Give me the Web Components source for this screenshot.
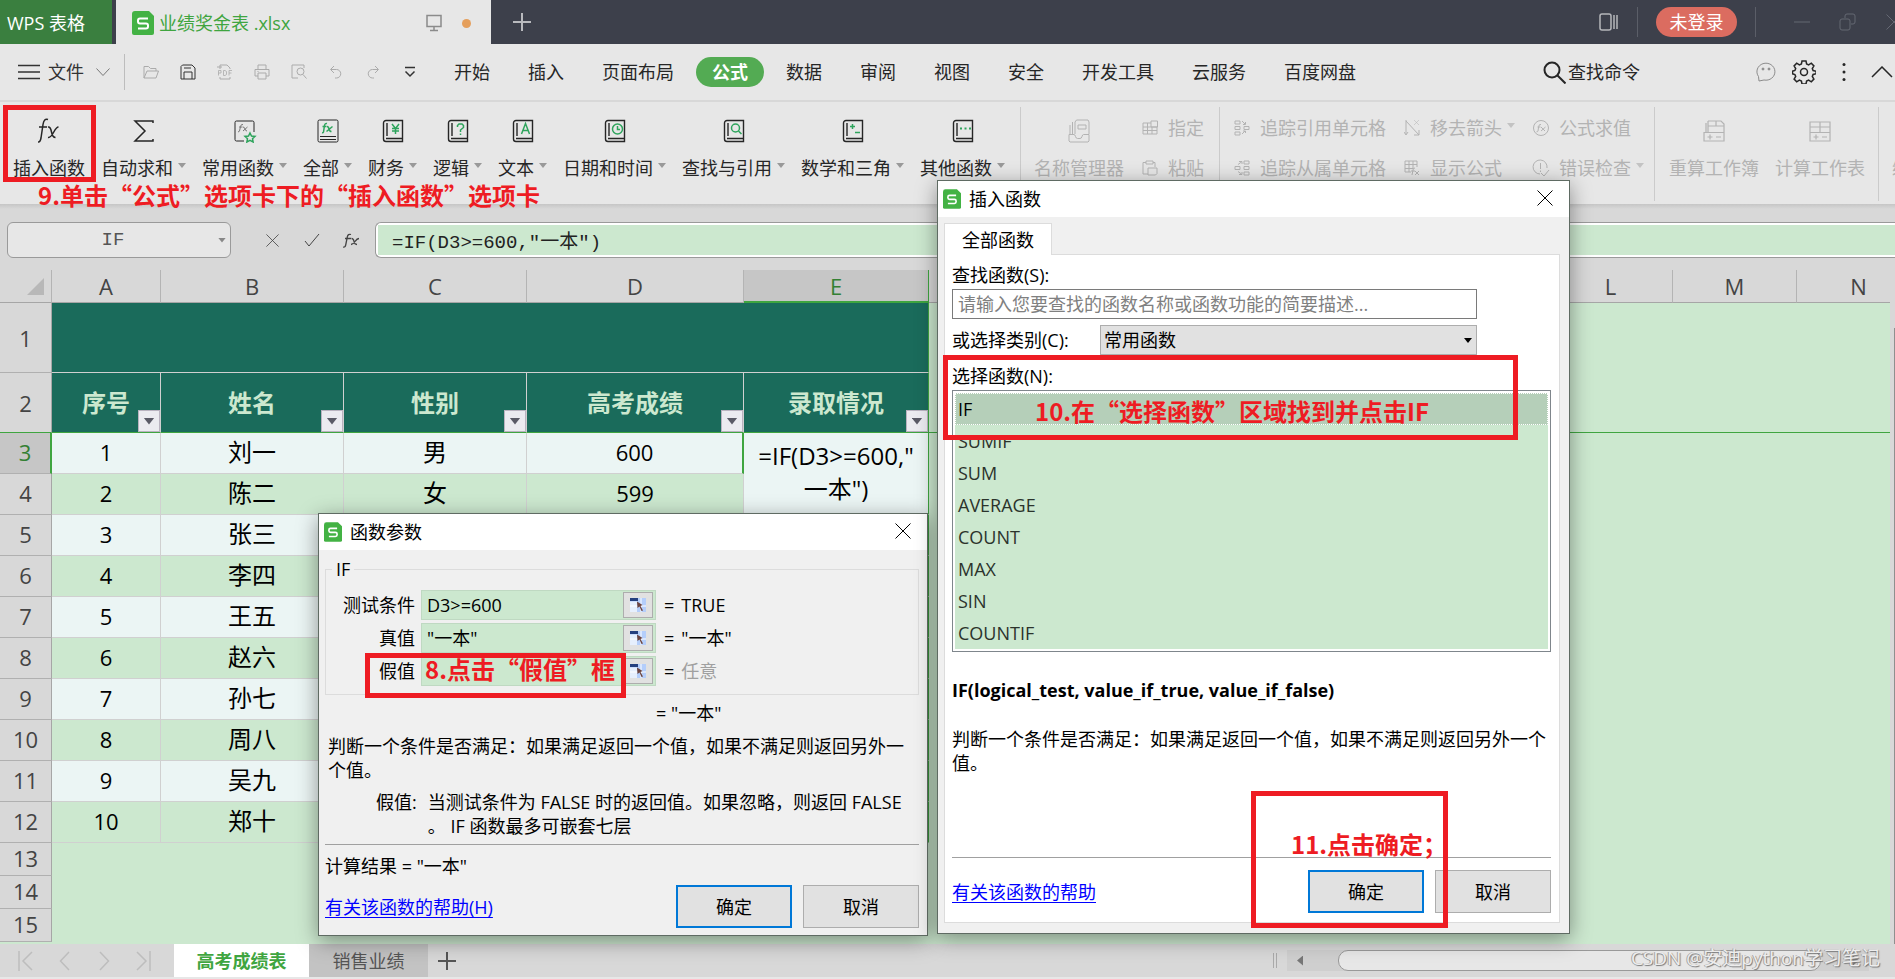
<!DOCTYPE html>
<html lang="zh-CN">
<head>
<meta charset="utf-8">
<title>业绩奖金表 .xlsx - WPS 表格</title>
<style>
html, body { margin: 0; height: 100%; }
body {
  font: 18px/24px "Open Sans", "Noto Sans CJK SC", sans-serif;
  color: #262626;
  overflow: hidden;
  --chrome: #e7e7e7;
  --bar: #d8d8d8;
  --line: #a6a6a6;
  --mint: #cce8cf;
  --green: #3fa540;
  --red: #ee1c23;
}
</style>
</head>
<body>
<wps-app></wps-app>

<script>
const ICONS = {
  logo: [22, 24, '<path d="M3 0h14l5 5v17a2 2 0 0 1-2 2H2a2 2 0 0 1-2-2V3a3 3 0 0 1 3-3z" fill="#43b244" stroke="none"/><path d="M16 7.500H8a2 2 0 0 0-2 2v1a2 2 0 0 0 2 2h6a2 2 0 0 1 2 2v1a2 2 0 0 1-2 2H6" fill="none" stroke="#fff" stroke-width="2"/>'],
  monitor: [18, 18, '<path d="M2 1.500h14v11H2zM9 13v3M5 16.500h8" stroke="#8b8b8b" stroke-width="1.500"/>'],
  plus: [18, 18, '<path d="M9 0v18M0 9h18" stroke-width="2"/>'],
  panels: [22, 20, '<rect x="2" y="2" width="11" height="16" rx="2" stroke-width="1.500"/><path d="M16 3v14M19 3v14" stroke-width="1.500"/>'],
  minimize: [16, 16, '<path d="M0 8h16"/>'],
  restore: [18, 18, '<rect x="1" y="6" width="10" height="11" rx="2"/><path d="M6 5V3a2 2 0 0 1 2-2h6a2 2 0 0 1 2 2v6a2 2 0 0 1-2 2h-2"/>'],
  close: [16, 16, '<path d="M0.500 0.500l15 15M15.500 0.500l-15 15"/>'],
  menu: [22, 16, '<path d="M0 1.500h22M0 8h22M0 14.500h22" stroke-width="1.500"/>'],
  down: [14, 8, '<path d="M0.500 0.500l6.500 7 6.500-7"/>'],
  up: [22, 12, '<path d="M1 11L11 1l10 10" stroke-width="1.500"/>'],
  folder: [16, 14, '<path d="M1 13V1.500h4.500l2 2H13V6M1 13l3-7h11.500L13 13z"/>'],
  save: [16, 16, '<path d="M1 15V2.500L2.500 1H12l3 3v11zM4 15V8h8v7M4 4h7"/>'],
  pdf: [16, 16, '<path d="M3 5V1h7l3 3v1M3 13v2h10v-2M0 3h5"/><path d="M1.500 11.500V6.500h2.500v2.500H1.500M6.500 6.500h1.500l1.500 1v3l-1.500 1H6.500zM12 11.500V6.500h3M12 9h2.500" stroke-width=".8"/>'],
  print: [16, 16, '<path d="M4 5V1h8v4M4 12H1V5.500h14V12h-3M4 9h8v6H4zM3.500 7.500h1"/>'],
  preview: [16, 16, '<path d="M7 14H1V1h12v3"/><circle cx="9.500" cy="7.500" r="3.500"/><path d="M12 10.500l3.500 4"/>'],
  undo: [14, 14, '<path d="M5 1L1.500 4.500 5 8M2 4.500h5.500a4 4 0 0 1 0 8.500H6"/>'],
  redo: [14, 14, '<path d="M9 1l3.500 3.500L9 8M12 4.500H6.500a4 4 0 0 0 0 8.500H8"/>'],
  more: [12, 12, '<path d="M1 1.500h10M1.500 5.500L6 10l4.500-4.500" stroke-width="1.500"/>'],
  search: [23, 23, '<circle cx="9" cy="9" r="7.500" stroke-width="2"/><path d="M14.500 14.500l8 8" stroke-width="2"/>'],
  chat: [22, 20, '<path d="M4 19l-.5-4.500A9 8.500 0 1 1 9 18z"/><circle cx="8" cy="7" r="1" fill="currentColor"/><circle cx="14" cy="7" r="1" fill="currentColor"/>'],
  gear: [24, 24, '<path d="M10 1h4l.6 3 2 .9 2.700-1.700 2.600 2.700-1.600 2.600.8 2 3 .7v2.600l-3 .7-.8 2 1.600 2.600-2.600 2.700-2.700-1.700-2 .9-.6 3h-4l-.6-3-2-.9-2.700 1.700-2.600-2.700 1.600-2.600-.8-2-2.400-.7v-2.600l2.400-.7.8-2L2.100 5.900l2.600-2.700 2.700 1.700 2-.9z" stroke-width="1.500"/><circle cx="12" cy="12" r="3.500" stroke-width="1.500"/>'],
  dots: [4, 20, '<g fill="currentColor" stroke="none"><circle cx="2" cy="2.500" r="1.500"/><circle cx="2" cy="10" r="1.500"/><circle cx="2" cy="17.500" r="1.500"/></g>'],
  sigma: [22, 24, '<path d="M20 4V2H2l10 10L2 22h18v-2" stroke-width="1.500"/>'],
  fav: [24, 24, '<path d="M11 22H3.500A1.500 1.500 0 0 1 2 20.500v-17A1.500 1.500 0 0 1 3.500 2h16A1.500 1.500 0 0 1 21 3.500V13"/><path d="M10 5.500q-2-.5-2.500 2L6.500 12q-.4 1-1.500.8M6 8h3.500M10 8q1.500 0 2 2t2 2M14.500 8L10 12" stroke="#777"/><path d="M17 14l1.500 3 3.500.4-2.500 2.300.6 3.300-3.100-1.600-3.100 1.600.6-3.300-2.500-2.300 3.500-.4z" stroke="#2ea45c" stroke-width="1.500"/>'],
  all: [24, 24, '<rect x="2" y="1" width="20" height="22" rx="1.500" /><path d="M4 17.500h16M4 20.500h16"/><path d="M11 4.500q-2-.5-2.500 2L7.500 13q-.4 1-1.500.8M6.500 7.500h4M11 7.500q1.500 0 2 2.500t2.500 2.500M16.500 7.500l-6 5" stroke="#2ea45c" stroke-width="1.500"/>'],
  money: book('<path d="M10 5l3.500 4.500L17 5M13.500 9.500V15M10 9.500h7M10 12h7"/>'),
  logic: book('<path d="M10.500 8V6.500l1.500-1.500h3l1.500 1.500v2L13.500 11v2M13.500 14.500V16"/>'),
  text: book('<path d="M9.500 15l4-10.500 4 10.500M11 11.500h5"/>'),
  date: book('<circle cx="13.500" cy="10" r="5"/><path d="M13.500 7v3.500H16"/>'),
  lookup: book('<circle cx="12.500" cy="9" r="4"/><path d="M15.500 12l3 3"/>'),
  math: book('<path d="M8 7.500h5M10.500 5v5M13 13.500h5"/>'),
  other: book('<path d="M8 9.500h2M12.500 9.500h2M17 9.500h2" stroke-width="2"/>'),
  names: [24, 24, '<path d="M3 6v9M5.500 3v12M8 15V3l1.500-2H21l1 2v12M2 15.500h5q1 0 1.500 2t2 2h2.500q1.500 0 2-2t1.500-2H22V22l-1 1H3l-1-1zM11 6h8v4h-8z"/>'],
  assign: [16, 16, '<path d="M9 3H1v11h14V7M1 7h14M1 10.500h14M5.500 3v11M10 7v7M9 1h6.500v6H9z"/>'],
  paste: [16, 16, '<path d="M4 2.500H1V14h5M11 2.500h2V7M4 1h7v3H4zM6 8h9v5.500L13.500 15H6z"/>'],
  precede: [16, 16, '<path d="M1 1h5v3H1zM1 6.500h5v3H1zM1 12h5v3H1zM10 6.500h5v3h-5zM8 1l3 3M11.500 2v2.500H9M8 14l3-3M9 11h2.500v2"/>'],
  depend: [16, 16, '<path d="M10 1h5v3h-5zM10 6.500h5v3h-5zM10 12h5v3h-5zM1 6.500h5v3H1zM4 4.500L7.500 2M5 1.500h3V4M4 11.500L7.500 14M5 14.500h3V12"/>'],
  unarrow: [16, 16, '<path d="M2 0v14M0 12l2 3 2-3M2 1l13 14M15 10v5h-5"/><path d="M10 0l5 5M15 0l-5 5" opacity=".5"/>'],
  show: [16, 16, '<path d="M7 12H1V1h12v6M1 4.500h12M1 8.500h8M5 1v11M9 1v8M11 8q-2 0-2 2l-1 5M7 11h4M11 11l4 4M15 11l-4 4"/>'],
  evaluate: [18, 18, '<circle cx="9" cy="9" r="7.500"/><path d="M9 5.500q-2-.5-2.300 2L6 12q-.3 1-1.500.8M5.500 8h3M9 8l4 4M13.500 8L9 12"/>'],
  check: [18, 18, '<path d="M8 15A7 7 0 1 1 15 9"/><path d="M8.500 4v6M8.500 11.500v1.500M9 14l3 3 5-6"/>'],
  calcbook: [24, 24, '<path d="M4 13V4M6 2h13l3 3v8M6 2v11M6 7h16M14 2v5M2 13.500h20V22H2zM5.500 18h5M8 15.500v5M14 18h5" stroke-width="1.200"/>'],
  calcsheet: [24, 24, '<path d="M2 13V3h20v10M2 8h20M12 3v10M2 13.500h20V22H2zM5.500 18h5M8 15.500v5M14 18h5" stroke-width="1.200"/>'],
  tick: [16, 14, '<path d="M1 8l4 5L15 1"/>'],
  fx: [22, 26, '<path d="M10 1.500q-4-1.500-5 5L3 20q-.8 4.500-3 4M1 9h8M10 9q2.500-.5 3.500 5t4 5.500M20.500 9q-2 0-5 5.500T10 19.500" stroke-width="1.500"/>'],
  fxs: [18, 15, '<path d="M9 1.500q-3-1-3.700 2.500L3.700 12q-.5 2.500-2.500 2M3 5.500h6M9.500 5.500q2 0 2.500 3t3 3M17 5.500q-2 0-4 3t-4 3" stroke-width="1.300"/>'],
  first: [16, 20, '<path d="M1 0v20M14 1L5 10l9 9" stroke-width="1.500"/>'],
  prev: [12, 20, '<path d="M10 1L1.500 10l8.500 9" stroke-width="1.500"/>'],
  next: [12, 20, '<path d="M2 1l8.500 9L2 19" stroke-width="1.500"/>'],
  last: [16, 20, '<path d="M15 0v20M2 1l9 9-9 9" stroke-width="1.500"/>'],
  range: [16, 14, '<path d="M0 0h16v14H0z" fill="#b4cefb" stroke="none"/><path d="M0 3.500h7V14H0z" fill="#e6effd" stroke="none"/><path d="M0 0h8v3H0z" fill="#25407f" stroke="none"/><path d="M0 8h16M11 0v14" stroke="#fff"/><path d="M7 3.500l5.500 3.500-2 1 2.500 4.500-1.500.5-2-4.500L7.500 10z" fill="#6b4440" stroke="none"/>'],
};

function book(mark) {
  return [22, 24, `<path d="M20.500 19.500V1.500H4A2.500 2.500 0 0 0 1.500 4v16A2.500 2.500 0 0 0 4 22.500h16.500v-3H4M5 4v13" stroke-width="1.400"/><g stroke="#2ea45c" stroke-width="1.500">${mark}</g>`];
}

/* Registers an element whose open shadow root holds the given styles and markup. */
function define(name, css, html) {
  const base = document.createElement('template');
  base.innerHTML = `<style>*{box-sizing:border-box}button,input,select{font:inherit;color:inherit;margin:0;padding:0;border:0;background:none}${css}</style>`;
  customElements.define(name, class extends HTMLElement {
    constructor() {
      super();
      this.attachShadow({ mode: 'open' });
    }
    connectedCallback() {
      if (this.shadowRoot.childNodes.length) return;
      const body = document.createElement('template');
      body.innerHTML = typeof html === 'function' ? html(this) : html;
      this.shadowRoot.append(base.content.cloneNode(true), body.content.cloneNode(true));
    }
  });
}

define('ui-icon', ':host{display:inline-flex;flex:none}svg{display:block;fill:none;stroke:currentColor}', el => {
  const [w, h, art] = ICONS[el.getAttribute('name')];
  const scale = Number(el.getAttribute('scale') || 1);
  return `<svg width="${Math.round(w * scale)}" height="${Math.round(h * scale)}" viewBox="0 0 ${w} ${h}" aria-hidden="true">${art}</svg>`;
});

define('ui-caret', ':host{display:block;flex:none;width:8px;height:5px;background:currentColor;clip-path:polygon(0 0,100% 0,50% 100%)}', '');

define('title-bar', `
:host{display:flex;height:44px;background:#3d404b;color:#fff;align-items:center;overflow:hidden;flex:none}
button{display:grid;place-items:center}
.home{width:112px;height:44px;background:#3a7f3f;padding:2px 0 0 7px;justify-content:start;margin-right:4px}
.doc{display:flex;align-items:center;width:375px;height:44px;background:var(--chrome);color:var(--green);padding:2px 20px 0 16px;gap:5px}
.doc span{flex:1}
.doc ui-icon:nth-of-type(2){margin-right:6px}
.doc i{width:9px;height:9px;border-radius:50%;background:#e59f5c;margin-left:8px}
.add{width:62px;color:#b9babe}
.space{flex:1}
.panels{color:#b5b6bb;margin-right:17px}
hr{width:1px;height:30px;border:0;margin:0;background:#5b5e68}
.login{width:81px;height:30px;border-radius:15px;background:#db6c60;margin:0 18px}
.windows{display:flex;margin:0 -22px 0 23px}
.windows button{width:46px;color:#656873}
`, `
<button class="home">WPS 表格</button>
<div class="doc"><ui-icon name="logo"></ui-icon><span>业绩奖金表 .xlsx</span><ui-icon name="monitor"></ui-icon><i></i></div>
<button class="add" aria-label="新建"><ui-icon name="plus"></ui-icon></button>
<div class="space"></div>
<button class="panels" aria-label="窗口"><ui-icon name="panels"></ui-icon></button><hr>
<button class="login">未登录</button><hr>
<div class="windows"><button aria-label="最小化"><ui-icon name="minimize"></ui-icon></button><button aria-label="还原"><ui-icon name="restore"></ui-icon></button><button aria-label="关闭"><ui-icon name="close"></ui-icon></button></div>`);

define('menu-bar', `
:host{display:flex;height:56px;background:var(--chrome);align-items:center;flex:none;overflow:hidden}
button{display:grid;place-items:center;white-space:nowrap;flex:none}
.file{display:flex;align-items:center;gap:8px;padding-left:18px;color:#333}
.file ui-icon:last-child{margin-left:4px;color:#777}
hr{width:1px;height:36px;border:0;background:#bdbdbd;margin:0 7px 0 14px}
.quick{width:37px;color:#ababab}
.quick.on{color:#333}
nav{display:flex;margin-left:7px}
nav button{height:30px;margin:0 3px;padding:0 16px}
nav .active{background:#53ab53;color:#fff;border-radius:15px;font-weight:bold}
.find{display:flex;gap:2px;margin-left:168px}
.space{flex:1}
.tool{margin-left:15px}
.tool.soft{color:#8c8c8c}
.tool.dots{margin:0 10px 0 26px}
.tool:last-child{margin-right:2px}
`, () => {
  const quick = ['folder', 'save', 'pdf', 'print', 'preview', 'undo', 'redo', 'more'];
  const names = ['打开', '保存', '输出为PDF', '打印', '打印预览', '撤销', '恢复', '更多'];
  const tabs = ['开始', '插入', '页面布局', '公式', '数据', '审阅', '视图', '安全', '开发工具', '云服务', '百度网盘'];
  return `<button class="file"><ui-icon name="menu"></ui-icon>文件<ui-icon name="down"></ui-icon></button><hr>
  ${quick.map((q, i) => `<button class="quick ${q === 'save' || q === 'more' ? 'on' : ''}" aria-label="${names[i]}"><ui-icon name="${q}"></ui-icon></button>`).join('')}
  <nav>${tabs.map(t => `<button class="${t === '公式' ? 'active' : ''}">${t}</button>`).join('')}</nav>
  <button class="find"><ui-icon name="search"></ui-icon>查找命令</button><div class="space"></div>
  <button class="tool soft" aria-label="反馈"><ui-icon name="chat"></ui-icon></button>
  <button class="tool" aria-label="设置"><ui-icon name="gear"></ui-icon></button>
  <button class="tool dots" aria-label="更多"><ui-icon name="dots"></ui-icon></button>
  <button class="tool" aria-label="收起"><ui-icon name="up"></ui-icon></button>`;
});

define('ribbon-button', `
:host{display:block;flex:none}
:host([disabled]){color:#b3b3b3}
button{display:flex;flex-direction:column;align-items:center;padding:0 8px;gap:12px;white-space:nowrap}
.icon{height:26px;display:grid;place-items:center}
.label{display:flex;gap:5px}
ui-caret{color:#999;margin-top:7px}
:host([small]) button{flex-direction:row;padding:0;gap:9px}
:host([small]) .icon{width:18px}
:host([disabled]) ui-caret{color:#c3c3c3}
`, el => `<button><span class="icon"><ui-icon name="${el.getAttribute('icon')}"></ui-icon></span><span class="label"><slot></slot>${el.hasAttribute('arrow') ? '<ui-caret></ui-caret>' : ''}</span></button>`);

define('ribbon-bar', `
:host{display:flex;height:104px;background:var(--chrome);border-top:2px solid var(--bar);flex:none;overflow:hidden;padding:16px 0 0 5px}
ribbon-button:first-child{margin-right:5px}
hr{width:1px;height:94px;border:0;background:#cbcbcb;margin:-11px 0 0;flex:none}
.pair{display:flex;flex-direction:column;gap:14px;flex:none;margin-top:-3px}
`, () => {
  const big = [['fx', '插入函数'], ['sigma', '自动求和', 1], ['fav', '常用函数', 1], ['all', '全部', 1], ['money', '财务', 1], ['logic', '逻辑', 1], ['text', '文本', 1], ['date', '日期和时间', 1], ['lookup', '查找与引用', 1], ['math', '数学和三角', 1], ['other', '其他函数', 1]];
  const small = (icon, label, arrow) => `<ribbon-button small disabled icon="${icon}" ${arrow ? 'arrow' : ''}>${label}</ribbon-button>`;
  return big.map(([i, l, a]) => `<ribbon-button icon="${i}" ${a ? 'arrow' : ''}>${l}</ribbon-button>`).join('') + `
  <hr style="margin-left:7px"><ribbon-button disabled icon="names" style="margin-left:5px">名称管理器</ribbon-button>
  <div class="pair" style="margin-left:9px;margin-right:10px">${small('assign', '指定')}${small('paste', '粘贴')}</div><hr>
  <div class="pair" style="margin-left:13px">${small('precede', '追踪引用单元格')}${small('depend', '追踪从属单元格')}</div>
  <div class="pair" style="margin-left:12px">${small('unarrow', '移去箭头', 1)}${small('show', '显示公式')}</div>
  <div class="pair" style="margin-left:12px;margin-right:10px">${small('evaluate', '公式求值')}${small('check', '错误检查', 1)}</div><hr>
  <ribbon-button disabled icon="calcbook" style="margin-left:6px">重算工作簿</ribbon-button>
  <ribbon-button disabled icon="calcsheet">计算工作表</ribbon-button><hr style="margin-left:5px">
  <ribbon-button disabled icon="names" style="margin-left:5px">编辑链接</ribbon-button>`;
});

define('formula-bar', `
:host{display:flex;height:66px;flex:none;background:linear-gradient(#c6c6c6,var(--bar) 5px);padding:18px 0 12px 7px;align-items:center;font-family:"Liberation Mono","Noto Sans CJK SC",monospace;font-size:19px}
.name{display:flex;align-items:center;width:224px;height:36px;border:1px solid #9a9a9a;border-radius:6px;background:var(--chrome);padding:0 4px 0 0;color:#555}
.name input{flex:1;min-width:0;text-align:center}
.name ui-caret{color:#888}
.acts{display:flex;width:144px;padding:0 5px 0 22px;color:#444}
.acts button{flex:1;display:grid;place-items:center}
.formula{flex:1;min-width:0;height:36px;border:1px solid #9a9a9a;border-right:0;border-radius:6px 0 0 6px;background:#fff;padding:2px 0 2px 2px}
.formula input{width:100%;height:30px;display:block;background:var(--mint);padding-left:14px;color:#222}
`, `
<div class="name"><input aria-label="名称框" value="IF"><ui-caret></ui-caret></div>
<div class="acts"><button aria-label="取消"><ui-icon name="close" scale="0.8"></ui-icon></button><button aria-label="输入"><ui-icon name="tick"></ui-icon></button><button aria-label="插入函数"><ui-icon name="fxs"></ui-icon></button></div>
<div class="formula"><input aria-label="编辑栏" value='=IF(D3>=600,"一本")'></div>`);

define('sheet-grid', `
:host{display:flex;flex:1;min-height:0;overflow:hidden;background:var(--bar)}
.view{flex:1;min-width:0;overflow:hidden;background:var(--mint)}
.bar{width:5px;border-right:1px solid #8f8f8f;margin-top:58px}
table{width:100%;min-width:1921px;table-layout:fixed;border-collapse:separate;border-spacing:0;font-size:22px;line-height:30px;text-align:center;color:#000}
td,th{padding:0;font-weight:normal;position:relative;overflow:hidden}
thead th{height:33px;background:var(--bar);color:#444;border-bottom:1px solid var(--line);border-right:1px solid #b4b4b4}
thead th:nth-child(6){background:#c6c6c6;color:#338033;border-bottom:2px solid var(--green);border-right-color:var(--green)}
.corner::after{content:"";position:absolute;right:7px;bottom:7px;width:17px;height:17px;background:#b8b8b8;clip-path:polygon(100% 0,100% 100%,0 100%)}
tbody th{background:var(--bar);color:#444;border-right:1px solid var(--line);border-bottom:1px solid #b0b0b0}
tbody td{border-right:1px solid #d0d0d0;border-bottom:1px solid #d0d0d0}
.person{height:41px}
.person td,.person th{padding-bottom:2px}
td.zh{font-size:24px}
.short{height:33px}
.short th{line-height:28px;padding-bottom:2px}
.merged td,.head td{background:#1a6b5b}
.merged{height:70px}
.head{height:60px}
.head td{font-size:24px;font-weight:bold;color:var(--mint);overflow:visible}
tbody .head td,tbody .head td.blank{border-bottom:1px solid var(--green)}
.head th{border-bottom-color:var(--green)}
.head button{position:absolute;right:0;bottom:0;width:22px;height:22px;border:1px solid #b9b3c0;background:#ebebf0;display:grid;place-items:center;color:#5a5a66}
.head ui-caret{width:11px;height:7px}
.odd td{background:#ebf5f4}
.first th{background:#c6c6c6;color:#338033;border-right:2px solid var(--green)}
tbody td.e{border-right-color:var(--green);vertical-align:middle}
tbody td.formula{background:#ebf5f4;font-size:24px;line-height:33px;padding-bottom:4px}
.first td:nth-child(5){border-right:2px solid var(--green)}
tbody td.blank{background:none;border:0}
`, () => {
  const cols = [52, 109, 183, 183, 217, 185, 620, 124, 124];
  const blank = n => Array(n).fill('<td class="blank"></td>').join('');
  const people = [['刘一', '男', '600'], ['陈二', '女', '599'], ['张三', '', ''], ['李四', '', ''], ['王五', '', ''], ['赵六', '', ''], ['孙七', '', ''], ['周八', '', ''], ['吴九', '', ''], ['郑十', '', '']];
  return `<div class="view"><table>
  <colgroup>${cols.map(w => `<col style="width:${w}px">`).join('')}<col></colgroup>
  <thead><tr><th class="corner"></th>${['A', 'B', 'C', 'D', 'E', '', 'L', 'M', 'N'].map(c => `<th>${c}</th>`).join('')}</tr></thead>
  <tbody>
  <tr class="merged"><th>1</th><td class="e" colspan="5"></td>${blank(4)}</tr>
  <tr class="head"><th>2</th>${['序号', '姓名', '性别', '高考成绩', '录取情况'].map((h, i) => `<td class="${i === 4 ? 'e' : ''}">${h}<button aria-label="筛选${h}"><ui-caret></ui-caret></button></td>`).join('')}${blank(4)}</tr>
  ${people.map(([n, s, g], i) => `<tr class="person ${i % 2 ? '' : 'odd'} ${i ? '' : 'first'}"><th>${i + 3}</th><td>${i + 1}</td><td class="zh">${n}</td><td class="zh">${s}</td><td>${g}</td>${i === 0 ? '<td class="e formula" rowspan="2">=IF(D3&gt;=600,"<br>一本")</td>' : i === 1 ? '' : '<td class="e"></td>'}${blank(4)}</tr>`).join('')}
  ${[13, 14, 15].map(r => `<tr class="short"><th>${r}</th>${blank(9)}</tr>`).join('')}
  </tbody></table></div><div class="bar"></div>`;
});

define('sheet-tabs', `
:host{display:flex;height:35px;flex:none;background:var(--bar);border-bottom:2px solid var(--chrome);align-items:center}
button{display:grid;place-items:center;height:33px;flex:none}
nav{display:flex;padding-left:6px}
nav button{width:39px;color:#bdbdbd}
.on{width:135px;margin-left:12px;background:#fff;color:var(--green);font-weight:bold}
.off{width:119px;background:#c3c3c3;color:#555}
.add{width:38px;color:#555}
.space{flex:1}
.grip{width:4px;height:15px;border:solid #aaa;border-width:0 1px;margin-right:10px}
.scroll{display:flex;align-items:center;width:582px;height:21px;margin-right:26px;background:#cfcfcf}
.scroll i{width:6px;height:10px;background:#777;margin:0 10px;clip-path:polygon(100% 0,100% 100%,0 50%)}
.scroll i:last-child{clip-path:polygon(0 0,0 100%,100% 50%)}
.thumb{flex:1;height:21px;border:1px solid #999;border-radius:10px;background:var(--chrome);margin:0 22px 0 25px}
`, `
<nav><button aria-label="第一张"><ui-icon name="first"></ui-icon></button><button aria-label="上一张"><ui-icon name="prev"></ui-icon></button><button aria-label="下一张"><ui-icon name="next"></ui-icon></button><button aria-label="最后一张"><ui-icon name="last"></ui-icon></button></nav>
<button class="on">高考成绩表</button><button class="off">销售业绩</button><button class="add" aria-label="新建工作表"><ui-icon name="plus"></ui-icon></button>
<div class="space"></div><div class="grip"></div><div class="scroll"><i></i><div class="thumb"></div><i></i></div>`);

define('app-dialog', `
:host{display:flex;flex-direction:column;background:#f0f0f0;border:1px solid #5f6b63;box-shadow:0 5px 20px rgba(0,0,0,.4);color:#000;box-sizing:border-box}
header{display:flex;align-items:center;height:36px;background:#fff;padding:0 16px 0 5px;gap:8px;flex:none}
header span{flex:1}
`, el => `<header><ui-icon name="logo" scale="0.82"></ui-icon><span>${el.getAttribute('heading')}</span><button aria-label="关闭"><ui-icon name="close"></ui-icon></button></header><slot></slot>`);

define('dialog-actions', `
:host{display:flex;align-items:center;gap:11px}
a{color:#00f;margin-right:auto;text-underline-offset:3px}
button{width:116px;height:43px;background:#e1e1e1;border:1px solid #adadad}
.ok{border:2px solid #0078d7}
`, '<a href="#help"><slot></slot></a><button class="ok">确定</button><button>取消</button>');

define('arg-field', `
:host{display:flex;align-items:center;height:30px;gap:6px}
label{width:82px;text-align:right}
.box{display:flex;align-items:center;width:235px;height:30px;background:var(--mint);border:1px solid #bfd9c2;padding:0 2px 0 5px}
input{flex:1;min-width:0}
button{width:30px;height:26px;border:1px solid #adadad;background:#e1e1e1;display:grid;place-items:center}
span{display:flex;gap:7px;margin-left:2px}
:host([muted]) em{color:#a0a0a0}
em{font-style:normal}
`, el => `<label for="v">${el.getAttribute('label')}</label><div class="box"><input id="v" value='${el.getAttribute('value')}'><button aria-label="选择区域"><ui-icon name="range"></ui-icon></button></div><span>= <em>${el.getAttribute('result')}</em></span>`);

define('function-args', `
:host{display:block}
app-dialog{width:610px;height:423px}
.body{display:flex;flex-direction:column;padding:7px 8px 7px 6px;flex:1}
fieldset{margin:0;border:1px solid #dcdcdc;padding:9px 0 6px 7px;display:flex;flex-direction:column;gap:3px;height:138px}
legend{padding:0 4px;margin-left:-1px}
.sum{margin:6px 0 0 331px}
p{margin:9px 0 0 3px}
.arg{display:flex;gap:11px;margin:8px 0 0 51px}
.arg span{white-space:nowrap}
hr{width:100%;border:0;border-top:1px solid #a0a0a0;margin:6px 0 9px}
dialog-actions{margin-top:auto}
`, `
<app-dialog heading="函数参数"><div class="body">
<fieldset><legend>IF</legend>
<arg-field label="测试条件" value="D3>=600" result="TRUE"></arg-field>
<arg-field label="真值" value='"一本"' result='"一本"'></arg-field>
<arg-field label="假值" value="" result="任意" muted></arg-field>
</fieldset>
<div class="sum">= "一本"</div>
<p>判断一个条件是否满足：如果满足返回一个值，如果不满足则返回另外一个值。</p>
<div class="arg"><span>假值:</span><span>当测试条件为 FALSE 时的返回值。如果忽略，则返回 FALSE<br>。 IF 函数最多可嵌套七层</span></div>
<hr><div>计算结果 = "一本"</div>
<dialog-actions>有关该函数的帮助(H)</dialog-actions>
</div></app-dialog>`);

define('insert-function', `
:host{display:block}
app-dialog{width:633px;height:754px}
.tab{align-self:flex-start;width:108px;height:32px;margin:6px 0 -1px 6px;background:#fff;border:1px solid #dcdcdc;border-bottom:0;z-index:1}
.panel{display:flex;flex-direction:column;margin:0 9px 10px 6px;padding:8px 8px 9px 7px;background:#fff;border:1px solid #dcdcdc;flex:1}
.search{width:525px;height:30px;border:1px solid #7a7a7a;padding:0 5px;margin:2px 0 6px}
.search::placeholder{color:#808080;opacity:1}
.row{display:flex;align-items:center;width:525px;height:30px;margin-bottom:9px}
.row label{width:148px}
.drop{flex:1;display:flex;position:relative}
select{appearance:none;flex:1;height:30px;background:#e1e1e1;border:1px solid #adadad;padding:0 3px;border-radius:0}
.drop ui-caret{position:absolute;right:5px;top:13px;pointer-events:none}
ul{list-style:none;margin:2px 0 0;padding:0;border:1px solid #7f868c;outline:2px solid #fff;outline-offset:-3px;background:var(--mint);height:262px;padding:2px}
li{height:32px;line-height:32px;padding-left:3px;color:#2b332c}
li[aria-selected]{background:#b5cfb9;border:1px dotted #fff;line-height:30px;padding-left:2px;color:#000}
h2{font-size:18px;line-height:24px;margin:26px 0 25px}
p{margin:0}
hr{width:100%;border:0;border-top:1px solid #a0a0a0;margin:auto 0 12px}
`, () => `
<app-dialog heading="插入函数">
<button class="tab">全部函数</button>
<div class="panel">
<label for="q">查找函数(S):</label>
<input id="q" class="search" placeholder="请输入您要查找的函数名称或函数功能的简要描述...">
<div class="row"><label for="c">或选择类别(C):</label><div class="drop"><select id="c"><option>常用函数</option></select><ui-caret></ui-caret></div></div>
<span id="n">选择函数(N):</span>
<ul role="listbox" aria-labelledby="n">${['IF', 'SUMIF', 'SUM', 'AVERAGE', 'COUNT', 'MAX', 'SIN', 'COUNTIF'].map((f, i) => `<li role="option" ${i ? '' : 'aria-selected="true"'}>${f}</li>`).join('')}</ul>
<h2>IF(logical_test, value_if_true, value_if_false)</h2>
<p>判断一个条件是否满足：如果满足返回一个值，如果不满足则返回另外一个值。</p>
<hr><dialog-actions>有关该函数的帮助</dialog-actions>
</div></app-dialog>`);

define('step-note', `
:host{position:absolute;box-sizing:border-box;border:5px solid var(--red);pointer-events:none;color:var(--red);font:bold 24px/30px "Noto Sans CJK SC",sans-serif;white-space:nowrap}
span{position:absolute;left:var(--x);top:var(--y)}
`, '<span><slot></slot></span>');

define('wps-app', `
:host{display:flex;flex-direction:column;height:100vh;position:relative;overflow:hidden}
function-args,insert-function{position:absolute}
function-args{left:318px;top:513px}
insert-function{left:937px;top:180px}
.mark{position:absolute;right:15px;bottom:8px;color:#ededed;text-shadow:1px 1px 1px #777,-1px 0 0 #a5a5a5;font-size:19px;line-height:26px;white-space:nowrap}
`, `
<title-bar></title-bar><menu-bar></menu-bar><ribbon-bar></ribbon-bar><formula-bar></formula-bar>
<sheet-grid></sheet-grid><sheet-tabs></sheet-tabs>
<function-args></function-args><insert-function></insert-function>
<step-note style="left:3px;top:105px;width:93px;height:77px;--x:30px;--y:70px">9.单击“公式”选项卡下的“插入函数”选项卡</step-note>
<step-note style="left:365px;top:653px;width:261px;height:45px;--x:55px;--y:-4px">8.点击“假值”框</step-note>
<step-note style="left:943px;top:355px;width:575px;height:85px;--x:87px;--y:36px">10.在“选择函数”区域找到并点击IF</step-note>
<step-note style="left:1251px;top:791px;width:197px;height:137px;--x:35px;--y:33px">11.点击确定；</step-note>
<div class="mark">CSDN @安迪python学习笔记</div>`);
</script>
</body>
</html>
